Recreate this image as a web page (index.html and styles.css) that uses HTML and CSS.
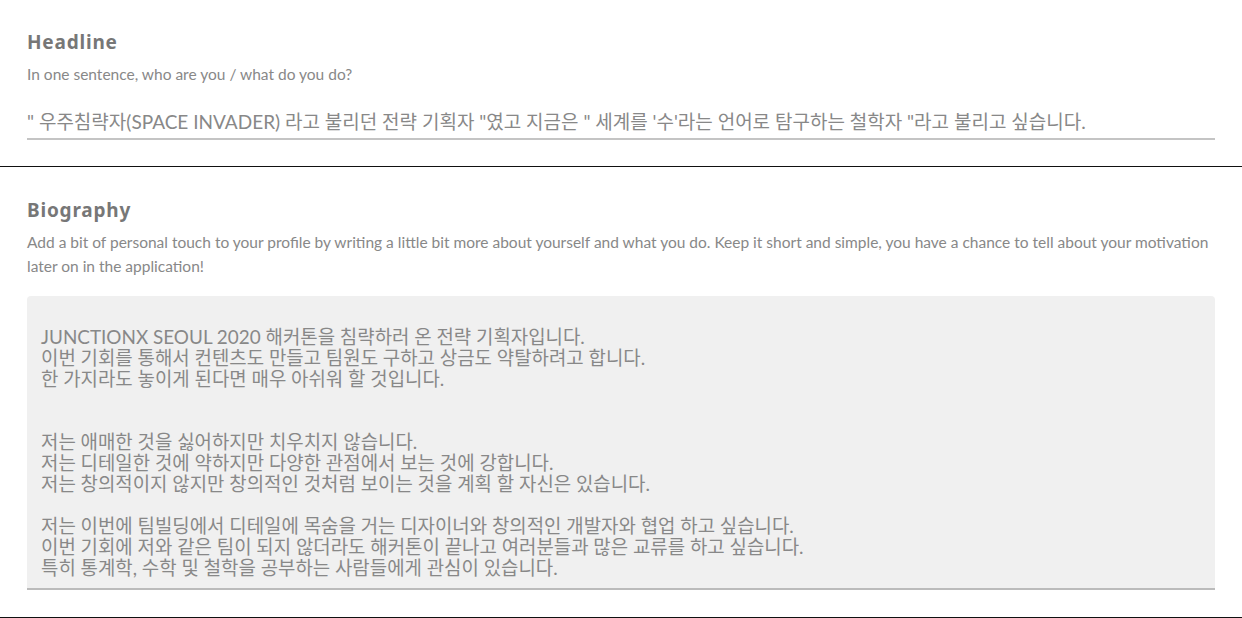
FILE: index.html
```html
<!DOCTYPE html>
<html lang="ko">
<head>
    <meta charset="UTF-8">
    <meta name="viewport" content="width=device-width, initial-scale=1.0">
    <title>Profile</title>
    <link rel="stylesheet" href="styles.css">
</head>
<body>
    <div class="section">
        <h2 class="title">Headline</h2>
        <p class="desc">In one sentence, who are you / what do you do?</p>
        <div class="line-input">" 우주침략자(SPACE INVADER) 라고 불리던 전략 기획자 "였고 지금은 " 세계를 '수'라는 언어로 탐구하는 철학자 "라고 불리고 싶습니다.</div>
    </div>

    <div class="section section-bio">
        <h2 class="title">Biography</h2>
        <p class="desc">Add a bit of personal touch to your profile by writing a little bit more about yourself and what you do. Keep it short and simple, you have a chance to tell about your motivation later on in the application!</p>
        <div class="text-box">JUNCTIONX SEOUL 2020 해커톤을 침략하러 온 전략 기획자입니다.
이번 기회를 통해서 컨텐츠도 만들고 팀원도 구하고 상금도 약탈하려고 합니다.
한 가지라도 놓이게 된다면 매우 아쉬워 할 것입니다.


저는 애매한 것을 싫어하지만 치우치지 않습니다.
저는 디테일한 것에 약하지만 다양한 관점에서 보는 것에 강합니다.
저는 창의적이지 않지만 창의적인 것처럼 보이는 것을 계획 할 자신은 있습니다.

저는 이번에 팀빌딩에서 디테일에 목숨을 거는 디자이너와 창의적인 개발자와 협업 하고 싶습니다.
이번 기회에 저와 같은 팀이 되지 않더라도 해커톤이 끝나고 여러분들과 많은 교류를 하고 싶습니다.
특히 통계학, 수학 및 철학을 공부하는 사람들에게 관심이 있습니다.</div>
    </div>
</body>
</html>
```

FILE: styles.css
```css
body {
    margin: 0;
    background: #fff;
    font-family: Lato, "Noto Sans CJK KR", sans-serif;
    color: #888;
}
.section {
    padding: 30px 27px 26px;
    border-bottom: 1px solid #111;
}
.section-bio {
    padding-top: 31px;
    padding-bottom: 27px;
}
.title {
    margin: 0;
    font-family: "Noto Sans", sans-serif;
    font-weight: 700;
    font-size: 19px;
    letter-spacing: 0.8px;
    line-height: 24px;
    color: #777;
}
.desc {
    margin: 8px 0 0;
    font-size: 15.5px;
    line-height: 24px;
    color: #888;
}
.line-input {
    margin-top: 24px;
    padding-bottom: 4px;
    border-bottom: 2px solid #c4c4c4;
    font-size: 19px;
    line-height: 24px;
    color: #888;
    white-space: nowrap;
}
.text-box {
    margin-top: 18px;
    height: 244px;
    padding: 30px 14px 18px;
    background: #f0f0f0;
    border-radius: 4px 4px 0 0;
    border-bottom: 2px solid #bbb;
    font-size: 18.9px;
    line-height: 21px;
    color: #888;
    white-space: pre-wrap;
}
```
